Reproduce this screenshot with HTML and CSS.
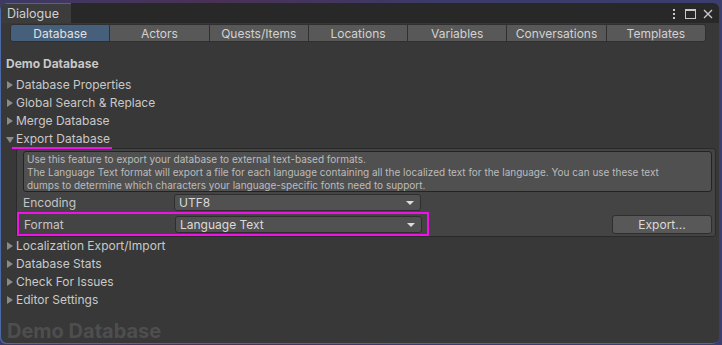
FILE: index.html
```html
<!DOCTYPE html>
<html lang="en">
<head>
    <meta charset="UTF-8">
    <title>Dialogue</title>
    <link rel="stylesheet" href="styles.css">
</head>
<body>
    <div class="window">
        <div class="title-bar">
            <div class="title-tab">Dialogue</div>
            <div class="title-controls">
                <span class="kebab"><i></i><i></i><i></i></span>
                <svg width="11" height="10" viewBox="0 0 11 10"><rect x="0.5" y="0.5" width="10" height="9" fill="none" stroke="#c8c8c8"/><rect x="0" y="0" width="11" height="2" fill="#c8c8c8"/></svg>
                <svg width="10" height="10" viewBox="0 0 10 10"><path d="M1 1 L9 9 M9 1 L1 9" stroke="#c8c8c8" stroke-width="1.4"/></svg>
            </div>
        </div>

        <div class="toolbar">
            <button class="tool-btn active">Database</button>
            <button class="tool-btn">Actors</button>
            <button class="tool-btn">Quests/Items</button>
            <button class="tool-btn">Locations</button>
            <button class="tool-btn">Variables</button>
            <button class="tool-btn">Conversations</button>
            <button class="tool-btn">Templates</button>
        </div>

        <div class="content">
            <div class="db-title">Demo Database</div>

            <div class="foldout">Database Properties</div>
            <div class="foldout">Global Search &amp; Replace</div>
            <div class="foldout">Merge Database</div>
            <div class="foldout open"><span class="marked">Export Database</span></div>

            <div class="export-group">
                <div class="help-box">
                    Use this feature to export your database to external text-based formats.<br>
                    The Language Text format will export a file for each language containing all the localized text for the language. You can use these text<br>
                    dumps to determine which characters your language-specific fonts need to support.
                </div>
                <div class="field-row">
                    <span class="field-label">Encoding</span>
                    <div class="popup">UTF8</div>
                </div>
                <div class="field-row last">
                    <div class="highlight">
                        <span class="field-label">Format</span>
                        <div class="popup">Language Text</div>
                    </div>
                    <button class="export-btn">Export...</button>
                </div>
            </div>

            <div class="foldout">Localization Export/Import</div>
            <div class="foldout">Database Stats</div>
            <div class="foldout">Check For Issues</div>
            <div class="foldout">Editor Settings</div>

            <div class="watermark">Demo Database</div>
        </div>
    </div>
</body>
</html>
```

FILE: styles.css
```css
/* General Reset */
* {
    margin: 0;
    padding: 0;
    box-sizing: border-box;
}

body {
    width: 722px;
    height: 345px;
    overflow: hidden;
    font-family: Inter, "Noto Sans", sans-serif;
    font-size: 12px;
    color: #c9c9c9;
    background: linear-gradient(90deg, #3d3a66 0%, #4a3155 30%, #3c3a68 60%, #3a3e6e 100%);
}

/* Window */
.window {
    margin: 3px 3px 2px 1px;
    height: 340px;
    border-radius: 6px;
    overflow: hidden;
    background: #383838;
    display: flex;
    flex-direction: column;
    box-shadow: -1px 1px 0 #4b69a6;
}

.title-bar {
    height: 20px;
    flex-shrink: 0;
    background: #282828;
    display: flex;
    align-items: stretch;
    justify-content: space-between;
}

.title-tab {
    width: 70px;
    background: #3c3c3c;
    border-top: 1px solid #3d6c9b;
    border-radius: 4px 0 0 0;
    padding: 2px 0 0 6px;
    font-size: 12.5px;
    color: #d0d0d0;
}

.title-controls {
    display: flex;
    align-items: center;
    gap: 7px;
    padding: 2px 6px 0 0;
}

.kebab {
    display: flex;
    flex-direction: column;
    gap: 2px;
    margin-right: 3px;
}

.kebab i {
    display: block;
    width: 2px;
    height: 2px;
    background: #c8c8c8;
}

/* Toolbar */
.toolbar {
    display: flex;
    flex-shrink: 0;
    padding: 1px 13px 3px 9px;
}

.tool-btn {
    flex: 1;
    height: 18px;
    font-family: inherit;
    font-size: 12px;
    color: #d2d2d2;
    background: #585858;
    border: 1px solid #303030;
    border-left: none;
}

.tool-btn:first-child {
    border-left: 1px solid #303030;
    border-radius: 3px 0 0 3px;
}

.tool-btn:last-child {
    border-radius: 0 3px 3px 0;
}

.tool-btn.active {
    background: #46607c;
    color: #e0e0e0;
}

/* Content */
.content {
    flex: 1;
    padding: 9px 0 0 5px;
}

.db-title {
    font-weight: bold;
    color: #c8c8c8;
    height: 20px;
    line-height: 20px;
    margin-bottom: 2px;
}

.foldout {
    height: 18px;
    line-height: 18px;
    padding-left: 10px;
    position: relative;
}

.foldout::before {
    content: "";
    position: absolute;
    left: 1px;
    top: 5px;
    border-left: 6px solid #8a8a8a;
    border-top: 4px solid transparent;
    border-bottom: 4px solid transparent;
}

.foldout.open::before {
    left: 0;
    top: 7px;
    border-top: 6px solid #8a8a8a;
    border-left: 4px solid transparent;
    border-right: 4px solid transparent;
    border-bottom: none;
}

.marked {
    display: inline-block;
    line-height: 16px;
    border-bottom: 2px solid #f012e6;
    margin-left: -4px;
    padding: 0 2px 0 4px;
}

/* Export group */
.export-group {
    margin: 0 3px 0 10px;
    padding: 2px 3px 0 6px;
    background: #444;
    border: 1px solid #2a2a2a;
    border-radius: 3px;
}

.help-box {
    height: 41px;
    background: #505050;
    border: 1px solid #232323;
    border-radius: 3px;
    padding: 1px 3px 0;
    font-size: 10px;
    line-height: 13px;
    color: #bcbcbc;
    white-space: nowrap;
}

.field-row {
    display: flex;
    align-items: center;
    height: 17px;
    margin-top: 2px;
}

.field-row.last {
    height: 24px;
    margin-top: 1px;
    justify-content: space-between;
}

.highlight {
    display: flex;
    align-items: center;
    width: 412px;
    height: 24px;
    margin-left: -6px;
    padding-left: 5px;
    border: 2px solid #f012e6;
}

.field-label {
    width: 151px;
    color: #c4c4c4;
}

.popup {
    width: 247px;
    height: 17px;
    line-height: 15px;
    padding-left: 4px;
    background: #515151;
    border: 1px solid #2e2e2e;
    border-radius: 3px;
    color: #dadada;
    position: relative;
}

.popup::after {
    content: "";
    position: absolute;
    right: 6px;
    top: 6px;
    border-top: 4px solid #dcdcdc;
    border-left: 4px solid transparent;
    border-right: 4px solid transparent;
}

.export-btn {
    width: 100px;
    height: 19px;
    font-family: inherit;
    font-size: 12px;
    color: #dadada;
    background: #585858;
    border: 1px solid #2e2e2e;
    border-radius: 3px;
    margin-top: 1px;
}

.watermark {
    font-size: 20px;
    font-weight: bold;
    color: #4e4e4e;
    line-height: 26px;
    margin-top: 9px;
    margin-left: 1px;
}
```
